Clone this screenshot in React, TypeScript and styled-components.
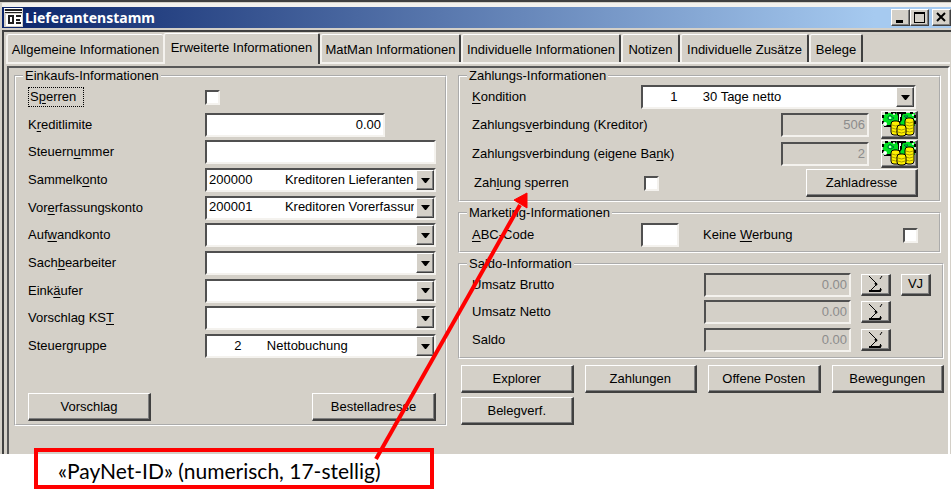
import React from "react";
import styled, { createGlobalStyle, css } from "styled-components";

const face = "#d4d0c8";
const dark = "#404040";
const mid = "#808080";

const GlobalStyle = createGlobalStyle`
  *, *::before, *::after { box-sizing: border-box; }
  body {
    margin: 0;
    background: #fff;
    color: #000;
    font: 13px/14px "Liberation Sans", Arial, sans-serif;
  }
  button, input, select { font: inherit; color: inherit; margin: 0; border-radius: 0; }
`;

const raised = css`
  border: 1px solid;
  border-color: #fff ${dark} ${dark} #fff;
  box-shadow: inset -1px -1px 0 ${mid};
  background: ${face};
`;

const sunken = css`
  border: 2px solid;
  border-color: #505050 #f4f2ee #f4f2ee #505050;
`;

const Page = styled.div`
  position: relative;
  overflow: hidden;
  min-height: 489px;
`;

const Window = styled.main`
  background: ${face};
  border-top: 2px solid ${dark};
  padding-left: 2px;
`;

const TitleBar = styled.header`
  display: flex;
  align-items: center;
  height: 21px;
  margin-top: 5px;
  padding-left: 2px;
  background: linear-gradient(90deg, #0a246a, #a6caf0 92%);
  box-shadow: 0 -4px 0 #f4f2ee, 0 -1px 0 ${face};
`;

const Title = styled.h1`
  flex: 1;
  margin: 0 0 0 2px;
  color: #fff;
  font: bold 14px/18px "Noto Sans", "DejaVu Sans", sans-serif;
`;

const WindowButton = styled.button<{ $gap?: boolean }>`
  ${raised}
  display: grid;
  place-items: center;
  width: 19px;
  height: 17px;
  padding: 0;
  margin-left: ${(p) => (p.$gap ? "3px" : "0")};
`;

const Client = styled.div`
  margin-top: 2px;
  border: solid ${dark};
  border-width: 2px 0 0 2px;
  padding: 1px 1px 0 2px;
`;

const Tabs = styled.div`
  display: flex;
  align-items: flex-end;
  height: 31px;
  border-bottom: 2px solid #f4f2ee;
`;

const Tab = styled.button<{ $active?: boolean; $w: number }>`
  flex: 0 1 ${(p) => p.$w}px;
  height: ${(p) => (p.$active ? "31px" : "28px")};
  margin-bottom: ${(p) => (p.$active ? "-2px" : "0")};
  padding: ${(p) => (p.$active ? "0 0 2px" : "2px 0 0")};
  border: solid;
  border-width: 1px 2px 0 2px;
  border-color: #fff ${dark} #fff #f4f2ee;
  border-radius: 3px 2px 0 0;
  background: ${face};
  white-space: nowrap;
  &:first-child { border-right: 0; }
`;

const Panel = styled.section`
  display: grid;
  grid-template-columns: minmax(0, 433fr) minmax(0, 486fr);
  gap: 11px;
  align-items: start;
  margin: 2px 0 0 1px;
  border: solid;
  border-width: 2px 2px 0 2px;
  border-color: #585858 #fff #fff #585858;
  padding: 1px 4px 28px 5px;
`;

const Column = styled.div`
  display: flex;
  flex-direction: column;
  gap: 4px;
`;

const Group = styled.fieldset<{ $inset?: boolean; $pad: string }>`
  margin: 0 ${(p) => (p.$inset ? "3px" : "0")} 0 0;
  min-width: 0;
  border: 2px groove #fff;
  padding: ${(p) => p.$pad};
`;

const Legend = styled.legend`
  margin-left: -5px;
  padding: 0 2px;
  height: 14px;
`;

const PurchaseRows = styled.div`
  display: grid;
  grid-auto-rows: 28px 27px 28px;
`;

const PaymentRows = styled.div`
  display: grid;
  grid-template-rows: 28px 28px 29px 30px;
`;

const BalanceRows = styled.div`
  display: grid;
  grid-template-rows: 27px 28px 28px;
`;

const Row = styled.div`
  display: flex;
  align-items: center;
  min-width: 0;
`;

const MarketingRow = styled(Row)`
  height: 30px;
`;

const Label = styled.label<{ $w?: number; $indent?: boolean }>`
  flex: ${(p) => (p.$w ? `0 0 ${p.$w}px` : "1")};
  padding-left: ${(p) => (p.$indent ? "2px" : "0")};
  white-space: nowrap;
`;

const Focus = styled.span`
  display: inline-block;
  border: 1px dotted #000;
  padding: 2px 7px 2px 1px;
`;

const U = styled.u`
  text-underline-offset: 2px;
`;

const TextField = styled.input<{ $w?: number }>`
  ${sunken}
  flex: ${(p) => (p.$w ? `0 0 ${p.$w}px` : "1")};
  width: ${(p) => (p.$w ? `${p.$w}px` : "auto")};
  min-width: 0;
  height: 24px;
  padding: 0 2px 1px;
  background: #fff;
  &:disabled { background: ${face}; color: #8c8c8c; }
`;

const NumberField = styled(TextField)`
  text-align: right;
`;

const Check = styled.input.attrs({ type: "checkbox" })`
  appearance: none;
  ${sunken}
  width: 15px;
  height: 15px;
  background: #fff;
`;

const Combo = styled.span<{ $inset?: boolean }>`
  ${sunken}
  position: relative;
  flex: 1;
  min-width: 0;
  height: 24px;
  margin-right: ${(p) => (p.$inset ? "2px" : "0")};
  background: #fff;
`;

const Select = styled.select`
  appearance: none;
  display: block;
  width: 100%;
  height: 20px;
  border: 0;
  padding: 0 20px 1px 2px;
  background: transparent;
  outline: 0;
`;

const DropArrow = styled.span`
  ${raised}
  position: absolute;
  top: 0;
  right: 0;
  bottom: 0;
  width: 18px;
  display: grid;
  place-items: center;
  pointer-events: none;
`;

const Button = styled.button<{ $w?: number }>`
  ${raised}
  border-width: 1px 2px 2px 1px;
  width: ${(p) => (p.$w ? `${p.$w}px` : "auto")};
  height: 28px;
  padding: 0;
  white-space: nowrap;
`;

const SmallButton = styled(Button)`
  display: grid;
  place-items: center;
  width: 30px;
  height: 22px;
  margin-left: 10px;
`;

const Vacant = styled.span`
  width: 40px;
`;

const MoneyButton = styled(Button)`
  width: 37px;
  margin-left: 12px;
  svg { display: block; }
`;

const Spacer = styled.span`
  flex: 1;
`;

const PurchaseActions = styled.div`
  display: flex;
  justify-content: space-between;
  margin-top: 33px;
`;

const Actions = styled.div`
  display: grid;
  grid-template-columns: repeat(4, 1fr);
  gap: 4px 11px;
  padding: 2px 0 0 3px;
`;

const Callout = styled.aside`
  position: absolute;
  left: 34px;
  top: 448px;
  width: 400px;
  height: 41px;
  border: 4px solid #f00;
  padding: 4px 0 0 20px;
  font: 21px/30px Lato, Carlito, sans-serif;
  white-space: nowrap;
`;

const Pointer = styled.svg`
  position: absolute;
  left: 370px;
  top: 190px;
  pointer-events: none;
`;

const FormIcon = () => (
  <svg width="19" height="19" viewBox="0 0 19 19" shapeRendering="crispEdges" aria-hidden="true">
    <path fill="#d4d0c8" d="M0 0h19v19H0z" />
    <path fill="#fff" d="M0 0h18v1H0zM0 3h18v1H0zM2 6h16v12H2z" />
    <path fill="#202020" d="M1 1h17v2H1zM1 4h17v1H1zM4 7h6v9H4zM12 7h5v2h-5zM12 11h4v2h-4zM12 14h5v2h-5z" />
    <path fill="#fff" d="M6 9h2v5H6z" />
  </svg>
);

const stack = (x: number, y: number, w: number, bottom: number) => (
  <g key={x}>
    <rect x={x} y={y} width={w} height={bottom - y} rx="3" fill="#fff000" stroke="#000" />
    <path
      d={Array.from({ length: Math.floor((bottom - y - 3) / 3) }, (_, i) => `M${x + 1} ${y + 4 + i * 3}q${w / 2 - 1} 2 ${w - 2} 0`).join("")}
      fill="none"
      stroke="#a89c00"
    />
  </g>
);

const MoneyIcon = () => (
  <svg width="34" height="25" viewBox="0 0 34 25" aria-hidden="true">
    <path d="M1 1h32v13H1z" fill="#00e020" />
    <path d="M1 3v3M1 9v3M33 3v3M33 9v3M3 1h3M9 1h5M20 1h4M28 1h3M2 14h8" stroke="#000" fill="none" strokeWidth="2" />
    <path d="M6 5l2-2 2 2 2 1-3 2-3-1zM22 4h4l-2 2z" fill="#00ff20" stroke="#064" />
    <circle cx="8" cy="6" r="1" fill="#fff" />
    <path d="M14 0l2 4v4l2 3 2-3V4l2-4z" fill="#000" />
    <path d="M17 2h2v3h-1v4h-1z" fill="#fff" />
    <g fill="#fff">
      <circle cx="2" cy="2" r="1" />
      <circle cx="3" cy="12" r="2" />
      <circle cx="12" cy="2" r="1" />
      <circle cx="31" cy="3" r="1" />
      <circle cx="33" cy="7" r="1" />
    </g>
    {stack(9, 9, 9, 23)}
    {stack(23, 6, 9, 23)}
    {stack(15, 13, 9, 24)}
  </svg>
);

const SigmaIcon = () => (
  <svg width="17" height="18" viewBox="0 0 17 18" fill="none" stroke="#000" aria-hidden="true">
    <path d="M2 1l8 8-8 8M13 4l2-3M14 14l-1-1" />
    <path d="M8 8l2 2" strokeWidth="2" />
    <path d="M2 16h11l1-2" strokeWidth="2" />
  </svg>
);

const Triangle = () => (
  <svg width="9" height="5" viewBox="0 0 9 5" aria-hidden="true">
    <path d="M0 0h9L5 5H4z" />
  </svg>
);

const gap = (n: number) => "\u00a0".repeat(n);

function Hot({ text }: { text: string }) {
  const [before, key, after] = text.split("_");
  return (
    <>
      {before}
      {key && <U>{key}</U>}
      {after}
    </>
  );
}

function Dropdown({ id, value, inset }: { id: string; value?: string; inset?: boolean }) {
  return (
    <Combo $inset={inset}>
      <Select id={id}>
        <option>{value ?? ""}</option>
      </Select>
      <DropArrow>
        <Triangle />
      </DropArrow>
    </Combo>
  );
}

const tabs = [
  { text: "Allgemeine Informationen", w: 157 },
  { text: "Erweiterte Informationen", w: 157, active: true },
  { text: "MatMan Informationen", w: 141 },
  { text: "Individuelle Informationen", w: 160 },
  { text: "Notizen", w: 59 },
  { text: "Individuelle Zusätze", w: 129 },
  { text: "Belege", w: 54 },
];

const accounts = [
  { id: "sammel", label: "Sammelk_o_nto", value: `200000${gap(9)}Kreditoren Lieferanten` },
  { id: "vorerf", label: "Vor_e_rfassungskonto", value: `200001${gap(9)}Kreditoren Vorerfassung` },
  { id: "aufwand", label: "Auf_w_andkonto" },
  { id: "sachb", label: "Sach_b_earbeiter" },
  { id: "eink", label: "Eink_ä_ufer" },
  { id: "kst", label: "Vorschlag KS_T_" },
  { id: "gruppe", label: "Steuergruppe", value: `${gap(7)}2${gap(7)}Nettobuchung` },
];

const banks = [
  { id: "kreditor", label: "Zahlungs_v_erbindung (Kreditor)", value: "506" },
  { id: "bank", label: "Zahlungsverbindung (eigene Ba_n_k)", value: "2" },
];

const balances = ["Umsatz Brutto", "Umsatz Netto", "Saldo"];

export default function App() {
  return (
    <Page>
      <GlobalStyle />
      <Window>
        <TitleBar>
          <FormIcon />
          <Title>Lieferantenstamm</Title>
          <WindowButton aria-label="Minimieren">
            <svg width="11" height="11"><path d="M1 8h7v3H1z" /></svg>
          </WindowButton>
          <WindowButton aria-label="Maximieren">
            <svg width="11" height="11" shapeRendering="crispEdges"><path d="M0 0h11v11H0zM1 2v8h9V2z" fillRule="evenodd" /></svg>
          </WindowButton>
          <WindowButton aria-label="Schliessen" $gap>
            <svg width="11" height="11"><path d="M1 1l8 8M9 1l-8 8" stroke="#000" strokeWidth="2" /></svg>
          </WindowButton>
        </TitleBar>
        <Client>
          <Tabs role="tablist">
            {tabs.map((t) => (
              <Tab key={t.text} role="tab" aria-selected={!!t.active} $active={t.active} $w={t.w}>
                {t.text}
              </Tab>
            ))}
          </Tabs>
          <Panel>
            <Group $pad="0 9px 3px 12px">
              <Legend>Einkaufs-Informationen</Legend>
              <PurchaseRows>
                <Row>
                  <Label htmlFor="sperren" $w={177}>
                    <Focus><Hot text="S_p_erren" /></Focus>
                  </Label>
                  <Check id="sperren" />
                </Row>
                <Row>
                  <Label htmlFor="limite" $w={177}><Hot text="K_r_editlimite" /></Label>
                  <NumberField id="limite" $w={180} defaultValue="0.00" />
                </Row>
                <Row>
                  <Label htmlFor="nummer" $w={177}><Hot text="Steuern_u_mmer" /></Label>
                  <TextField id="nummer" />
                </Row>
                {accounts.map((a) => (
                  <Row key={a.id}>
                    <Label htmlFor={a.id} $w={177}><Hot text={a.label} /></Label>
                    <Dropdown id={a.id} value={a.value} />
                  </Row>
                ))}
              </PurchaseRows>
              <PurchaseActions>
                <Button $w={123}>Vorschlag</Button>
                <Button $w={124}>Bestelladresse</Button>
              </PurchaseActions>
            </Group>

            <Column>
              <Group $inset $pad="0 21px 2px 12px">
                <Legend>Zahlungs-Informationen</Legend>
                <PaymentRows>
                  <Row>
                    <Label htmlFor="kondition" $w={169}><Hot text="_K_ondition" /></Label>
                    <Dropdown id="kondition" value={`${gap(7)}1${gap(7)}30 Tage netto`} inset />
                  </Row>
                  {banks.map((b) => (
                    <Row key={b.id}>
                      <Label htmlFor={b.id}><Hot text={b.label} /></Label>
                      <NumberField id={b.id} $w={88} value={b.value} disabled />
                      <MoneyButton aria-label="Zahlungsverbindungen"><MoneyIcon /></MoneyButton>
                    </Row>
                  ))}
                  <Row>
                    <Label htmlFor="zsperren" $w={172} $indent><Hot text="Zah_l_ung sperren" /></Label>
                    <Check id="zsperren" />
                    <Spacer />
                    <Button $w={112}>Zahladresse</Button>
                  </Row>
                </PaymentRows>
              </Group>

              <Group $inset $pad="0 21px 1px 12px">
                <Legend>Marketing-Informationen</Legend>
                <MarketingRow>
                  <Label htmlFor="abc" $w={169}><Hot text="_A_BC-Code" /></Label>
                  <TextField id="abc" $w={38} />
                  <Spacer />
                  <Label htmlFor="werbung" $w={200}><Hot text="Keine _W_erbung" /></Label>
                  <Check id="werbung" />
                </MarketingRow>
              </Group>

              <Group $pad="0 11px 3px 12px">
                <Legend>Saldo-Information</Legend>
                <BalanceRows>
                  {balances.map((text, i) => (
                    <Row key={text}>
                      <Label htmlFor={`saldo${i}`}>{text}</Label>
                      <NumberField id={`saldo${i}`} $w={147} value="0.00" disabled />
                      <SmallButton aria-label={`Summe ${text}`}><SigmaIcon /></SmallButton>
                      {i === 0 ? <SmallButton>VJ</SmallButton> : <Vacant />}
                    </Row>
                  ))}
                </BalanceRows>
              </Group>

              <Actions>
                <Button>Explorer</Button>
                <Button>Zahlungen</Button>
                <Button>Offene Posten</Button>
                <Button>Bewegungen</Button>
                <Button>Belegverf.</Button>
              </Actions>
            </Column>
          </Panel>
        </Client>
      </Window>
      <Callout>«PayNet-ID» (numerisch, 17-stellig)</Callout>
      <Pointer width="165" height="272" viewBox="0 0 165 272" aria-hidden="true">
        <path d="M6 269L150 15" stroke="#f00" strokeWidth="4" />
        <path d="M157 3L157 18L144 10z" fill="#f00" stroke="#f00" />
      </Pointer>
    </Page>
  );
}
